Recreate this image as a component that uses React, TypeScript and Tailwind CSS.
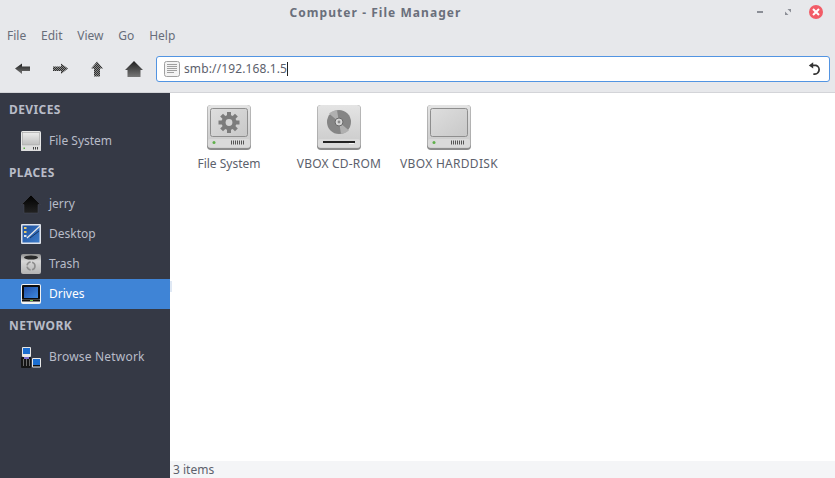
const font = "font-['Noto_Sans','Open_Sans',sans-serif]";

// Toolbar glyphs
function ToolIcon({ d, dither }: { d: string; dither?: boolean }) {
  const id = 'tool' + d.length;
  return (
    <svg width="18" height="18" viewBox="0 0 18 18">
      <defs>
        <linearGradient id={id} x1="0" y1="0" x2="0" y2="1">
          <stop offset="0" stopColor="#1f1f1f" />
          <stop offset="1" stopColor="#777" />
        </linearGradient>
        <pattern id={id + 'p'} width="2" height="2" patternUnits="userSpaceOnUse">
          <rect width="2" height="2" fill="#8a8a8a" />
          <rect width="1" height="1" fill="#2e2e2e" />
          <rect x="1" y="1" width="1" height="1" fill="#2e2e2e" />
        </pattern>
      </defs>
      <path d={d} fill={dither ? `url(#${id}p)` : `url(#${id})`} />
    </svg>
  );
}

function Reload() {
  return (
    <svg width="14" height="14" viewBox="0 0 14 14" fill="none">
      <path d="M4 3.4 H8 A4.3 4.3 0 1 1 5.4 11.8" stroke="#333" strokeWidth="1.8" />
      <path d="M5.2 0.2 V6.6 L0.8 3.4 Z" fill="#333" />
    </svg>
  );
}

function FileGlyph() {
  return (
    <svg width="16" height="16" viewBox="0 0 16 16">
      <rect x="0.5" y="0.5" width="15" height="15" rx="2" fill="#f3f3f3" stroke="#a0a0a0" />
      <path d="M3 3.5h10M3 5.5h10M3 7.5h10M3 9.5h10M3 11.5h7" stroke="#9f9f9f" strokeWidth="1" />
    </svg>
  );
}

// Big drive icon used in the icon view
function Drive({ kind }: { kind: 'gear' | 'cd' | 'hd' }) {
  const id = 'drive' + kind;
  return (
    <svg width="46" height="46" viewBox="0 0 46 46">
      <defs>
        <linearGradient id={id} x1="0" y1="0" x2="0" y2="1">
          <stop offset="0" stopColor="#e4e4e4" />
          <stop offset="1" stopColor="#c9c9c9" />
        </linearGradient>
        <linearGradient id={id + 'f'} x1="0" y1="0" x2="1" y2="1">
          <stop offset="0" stopColor="#dedede" />
          <stop offset="1" stopColor="#c8c8c8" />
        </linearGradient>
      </defs>
      <rect x="1" y="1" width="44" height="45" rx="4" fill="#8d8d8d" />
      <rect x="1.5" y="1" width="43" height="43" rx="3.5" fill={`url(#${id})`} />
      <rect x="2" y="35" width="42" height="8.5" rx="2" fill="#dadada" />
      {kind !== 'cd' && (
        <>
          <rect x="4.5" y="4.5" width="37" height="28" rx="2" fill={`url(#${id}f)`} stroke="#8e8e8e" strokeWidth="1" />
          <circle cx="8" cy="38.5" r="1.5" fill="#5fb04a" />
          <path d="M25.5 36.5v4M27.5 36.5v4M29.5 36.5v4M31.5 36.5v4M33.5 36.5v4M35.5 36.5v4M37.5 36.5v4" stroke="#555" strokeWidth="1" />
        </>
      )}
      {kind === 'gear' && (
        <g>
          <circle cx="23" cy="18.5" r="7.5" fill="#7c7c7c" />
          <g stroke="#7c7c7c" strokeWidth="4">
            <path d="M23 8v21M12.5 18.5h21M15.6 11.1l14.8 14.8M30.4 11.1 15.6 25.9" />
          </g>
          <circle cx="23" cy="18.5" r="3.4" fill="#d4d4d4" />
        </g>
      )}
      {kind === 'cd' && (
        <>
          <circle cx="23" cy="18" r="12" fill="#858585" />
          <path d="M23 18 L13 9.5 A12 12 0 0 1 21 6.2 Z M23 18 L33 26.5 A12 12 0 0 1 25 29.8 Z" fill="#b0b0b0" />
          <circle cx="23" cy="18" r="4" fill="#d6d6d6" stroke="#6a6a6a" strokeWidth="1" />
          <circle cx="23" cy="18" r="1.4" fill="#8a8a8a" />
          <rect x="7" y="37" width="32" height="2" fill="#222" />
          <rect x="33" y="39" width="5" height="1" fill="#f8f8f8" />
        </>
      )}
    </svg>
  );
}

// Small sidebar icons
function SideDrive() {
  return (
    <svg width="20" height="20" viewBox="0 0 20 20">
      <defs>
        <linearGradient id="sidedrive" x1="0" y1="0" x2="0" y2="1">
          <stop offset="0" stopColor="#ececec" />
          <stop offset="1" stopColor="#bdbdbd" />
        </linearGradient>
      </defs>
      <rect x="0" y="0" width="20" height="20" rx="1.5" fill="#e9e9e9" />
      <rect x="1.5" y="1.5" width="17" height="12.5" fill="url(#sidedrive)" stroke="#a8a8a8" strokeWidth="0.7" />
      <rect x="0" y="15" width="20" height="5" rx="1" fill="#dedede" />
      <rect x="2.5" y="16.5" width="1.5" height="1.5" fill="#5fb04a" />
      <path d="M12.5 16v2.5M14.5 16v2.5M16.5 16v2.5" stroke="#444" strokeWidth="1" />
    </svg>
  );
}

function SideHome() {
  return (
    <svg width="20" height="20" viewBox="0 0 20 20">
      <defs>
        <linearGradient id="sidehome" x1="0" y1="0" x2="0" y2="1">
          <stop offset="0" stopColor="#000" />
          <stop offset="1" stopColor="#222" />
        </linearGradient>
      </defs>
      <path d="M10 1 L19.5 10.5 H17 V19 H3 V10.5 H0.5 Z" fill="url(#sidehome)" stroke="#4a4d58" strokeWidth="0.5" />
    </svg>
  );
}

function SideDesktop() {
  return (
    <svg width="20" height="20" viewBox="0 0 20 20">
      <defs>
        <linearGradient id="sidedesk" x1="0" y1="0" x2="1" y2="1">
          <stop offset="0" stopColor="#1e4f9c" />
          <stop offset="1" stopColor="#3c7cc9" />
        </linearGradient>
      </defs>
      <rect width="20" height="20" rx="1" fill="#dfe3ea" />
      <rect x="1.5" y="1.5" width="17" height="17" fill="url(#sidedesk)" />
      <rect x="3" y="3" width="2.5" height="2" fill="#e5c96b" />
      <rect x="3" y="7" width="2.5" height="2" fill="#e5c96b" />
      <rect x="3" y="11" width="2.5" height="2" fill="#dfe3ea" />
      <path d="M19 2 L6 14" stroke="#e8e8e8" strokeWidth="1.2" />
      <path d="M9 14 L18 7" stroke="#17345f" strokeWidth="1" />
    </svg>
  );
}

function SideTrash() {
  return (
    <svg width="20" height="20" viewBox="0 0 20 20">
      <defs>
        <linearGradient id="sidetrash" x1="0" y1="0" x2="0" y2="1">
          <stop offset="0" stopColor="#8f8f8f" />
          <stop offset="0.35" stopColor="#d6d6d6" />
          <stop offset="1" stopColor="#b4b4b4" />
        </linearGradient>
      </defs>
      <rect width="20" height="20" rx="2" fill="url(#sidetrash)" />
      <ellipse cx="10" cy="3.5" rx="7" ry="2" fill="#2a2a2a" />
      <circle cx="10" cy="12" r="4" fill="none" stroke="#8d8d8d" strokeWidth="1.6" strokeDasharray="5 1.5" />
    </svg>
  );
}

function SideMonitor() {
  return (
    <svg width="20" height="20" viewBox="0 0 20 20">
      <defs>
        <linearGradient id="sidemon" x1="0" y1="0" x2="1" y2="1">
          <stop offset="0" stopColor="#1f4fa8" />
          <stop offset="1" stopColor="#3f8ae0" />
        </linearGradient>
      </defs>
      <rect width="20" height="20" rx="2" fill="#f2f2f2" />
      <rect x="1" y="1" width="18" height="14.5" rx="1" fill="#0c0c0c" />
      <rect x="3" y="3" width="14" height="11" fill="url(#sidemon)" />
      <rect x="1" y="15.5" width="18" height="2" fill="#111" />
      <rect x="9" y="16" width="3" height="1" fill="#6fd04a" />
    </svg>
  );
}

function SideNetwork() {
  return (
    <svg width="20" height="21" viewBox="0 0 20 21">
      <rect x="1" y="0" width="9" height="10" rx="1" fill="#e8e8e8" />
      <rect x="2" y="1" width="7" height="6" fill="#1c6ed0" />
      <rect x="0" y="10" width="10" height="11" rx="1" fill="#151515" />
      <path d="M2.5 12v7M5.5 12v7M8.5 12v7" stroke="#6a6a6a" strokeWidth="1" />
      <rect x="3" y="10" width="5" height="2" fill="#7a6fd0" />
      <rect x="11" y="11" width="9" height="9.5" rx="1" fill="#e8e8e8" />
      <rect x="12" y="12" width="7" height="6" fill="#1c6ed0" />
      <rect x="12" y="18" width="7" height="1.5" fill="#111" />
    </svg>
  );
}

function Heading({ children }: { children: string }) {
  return <div className="h-[32px] pl-[9px] flex items-center text-[12px] font-bold text-[#b8bcc8] tracking-[0.4px]">{children}</div>;
}

function Place({ icon, label, active, wide }: { icon: React.ReactNode; label: string; active?: boolean; wide?: boolean }) {
  return (
    <div className={`h-[30px] pl-[21px] flex items-center gap-[8px] text-[12px] ${wide ? 'tracking-[0.2px]' : ''} ${active ? 'bg-[#3f84d6] text-white' : 'text-[#b8bcc8]'}`}>
      {icon}
      <span>{label}</span>
    </div>
  );
}

function DriveItem({ kind, label, tracking }: { kind: 'gear' | 'cd' | 'hd'; label: string; tracking?: string }) {
  return (
    <div className="w-[110px] flex flex-col items-center">
      <Drive kind={kind} />
      <span className={`mt-[5px] text-[12px] leading-[17px] text-[#5c616c] ${tracking ?? ''}`}>{label}</span>
    </div>
  );
}

export default function App() {
  return (
    <div className={`${font} w-[835px] h-[478px] flex flex-col overflow-hidden bg-[#e7e8eb]`}>
      {/* title bar */}
      <div className="relative h-[25px] flex items-center justify-center pt-[1px] pr-[84px]">
        <span className="text-[12px] font-bold text-[#6a6f7b] tracking-[1.05px]">Computer - File Manager</span>
        <div className="absolute left-[757px] top-[5px] flex items-center">
          <div className="w-[6px] h-[2px] bg-[#8b8e96]" />
          <svg className="ml-[22px]" width="6" height="6" viewBox="0 0 6 6">
            <path d="M2.5 0H6V3.5Z M0 2.5V6H3.5Z" fill="#8b8e96" />
          </svg>
          <div className="ml-[18px] w-[14px] h-[14px] rounded-full bg-[#f25c67] flex items-center justify-center">
            <svg width="8" height="8" viewBox="0 0 8 8">
              <path d="M1 1L7 7M7 1L1 7" stroke="#fff" strokeWidth="2" />
            </svg>
          </div>
        </div>
      </div>

      {/* menu bar */}
      <div className="h-[20px] pl-[7px] pt-[1px] flex items-center gap-[14.8px] text-[12px] text-[#686d7a]">
        <span>File</span>
        <span>Edit</span>
        <span>View</span>
        <span>Go</span>
        <span>Help</span>
      </div>

      {/* toolbar */}
      <div className="h-[48px] flex items-center border-b border-[#d3d4d8] pl-[14px] pr-[5px]">
        <div className="flex items-center gap-[19px]">
          <ToolIcon d="M1 8.5 L8 3.5 V6.5 H16 V11 H8 V14 Z" />
          <ToolIcon dither d="M17 8.5 L10 3.5 V6.5 H2 V11 H10 V14 Z" />
          <ToolIcon dither d="M9 1.5 L15 8.5 H12 V16.5 H6 V8.5 H3 Z" />
          <ToolIcon d="M9 1 L18 10 H15.5 V17 H2.5 V10 H0 Z" />
        </div>
        <div className="ml-[13px] flex-1 h-[26px] bg-white border border-[#5294e2] rounded-[3px] flex items-center pl-[7px] pr-[7px]">
          <FileGlyph />
          <span className="ml-[4px] pt-[1px] text-[12px] tracking-[0.12px] text-[#5c616c]">smb://192.168.1.5</span>
          <span className="w-px h-[14px] bg-[#222]" />
          <span className="flex-1" />
          <Reload />
        </div>
      </div>

      {/* body */}
      <div className="flex-1 flex min-h-0">
        <aside className="relative w-[170px] bg-[#353945] pt-[1px]">
          <Heading>DEVICES</Heading>
          <Place icon={<SideDrive />} label="File System" />
          <div className="h-[1px]" />
          <Heading>PLACES</Heading>
          <Place icon={<SideHome />} label="jerry" />
          <Place icon={<SideDesktop />} label="Desktop" />
          <Place icon={<SideTrash />} label="Trash" />
          <Place icon={<SideMonitor />} label="Drives" active />
          <div className="h-[1px]" />
          <Heading>NETWORK</Heading>
          <Place icon={<SideNetwork />} label="Browse Network" wide />
          {/* pane grip */}
          <div className="absolute left-[170px] top-[188px] w-[2px] h-[11px] bg-[#dfe8f4]" />
        </aside>
        <main className="flex-1 flex flex-col bg-white">
          <div className="flex-1 flex items-start pt-[11px] pl-[4px]">
            <DriveItem kind="gear" label="File System" />
            <DriveItem kind="cd" label="VBOX CD-ROM" tracking="tracking-[0.2px]" />
            <DriveItem kind="hd" label="VBOX HARDDISK" tracking="tracking-[0.3px]" />
          </div>
          <div className="h-[17px] bg-[#f4f5f7] pl-[3px] flex items-center text-[12px] text-[#5c616c]">3 items</div>
        </main>
      </div>
    </div>
  );
}
